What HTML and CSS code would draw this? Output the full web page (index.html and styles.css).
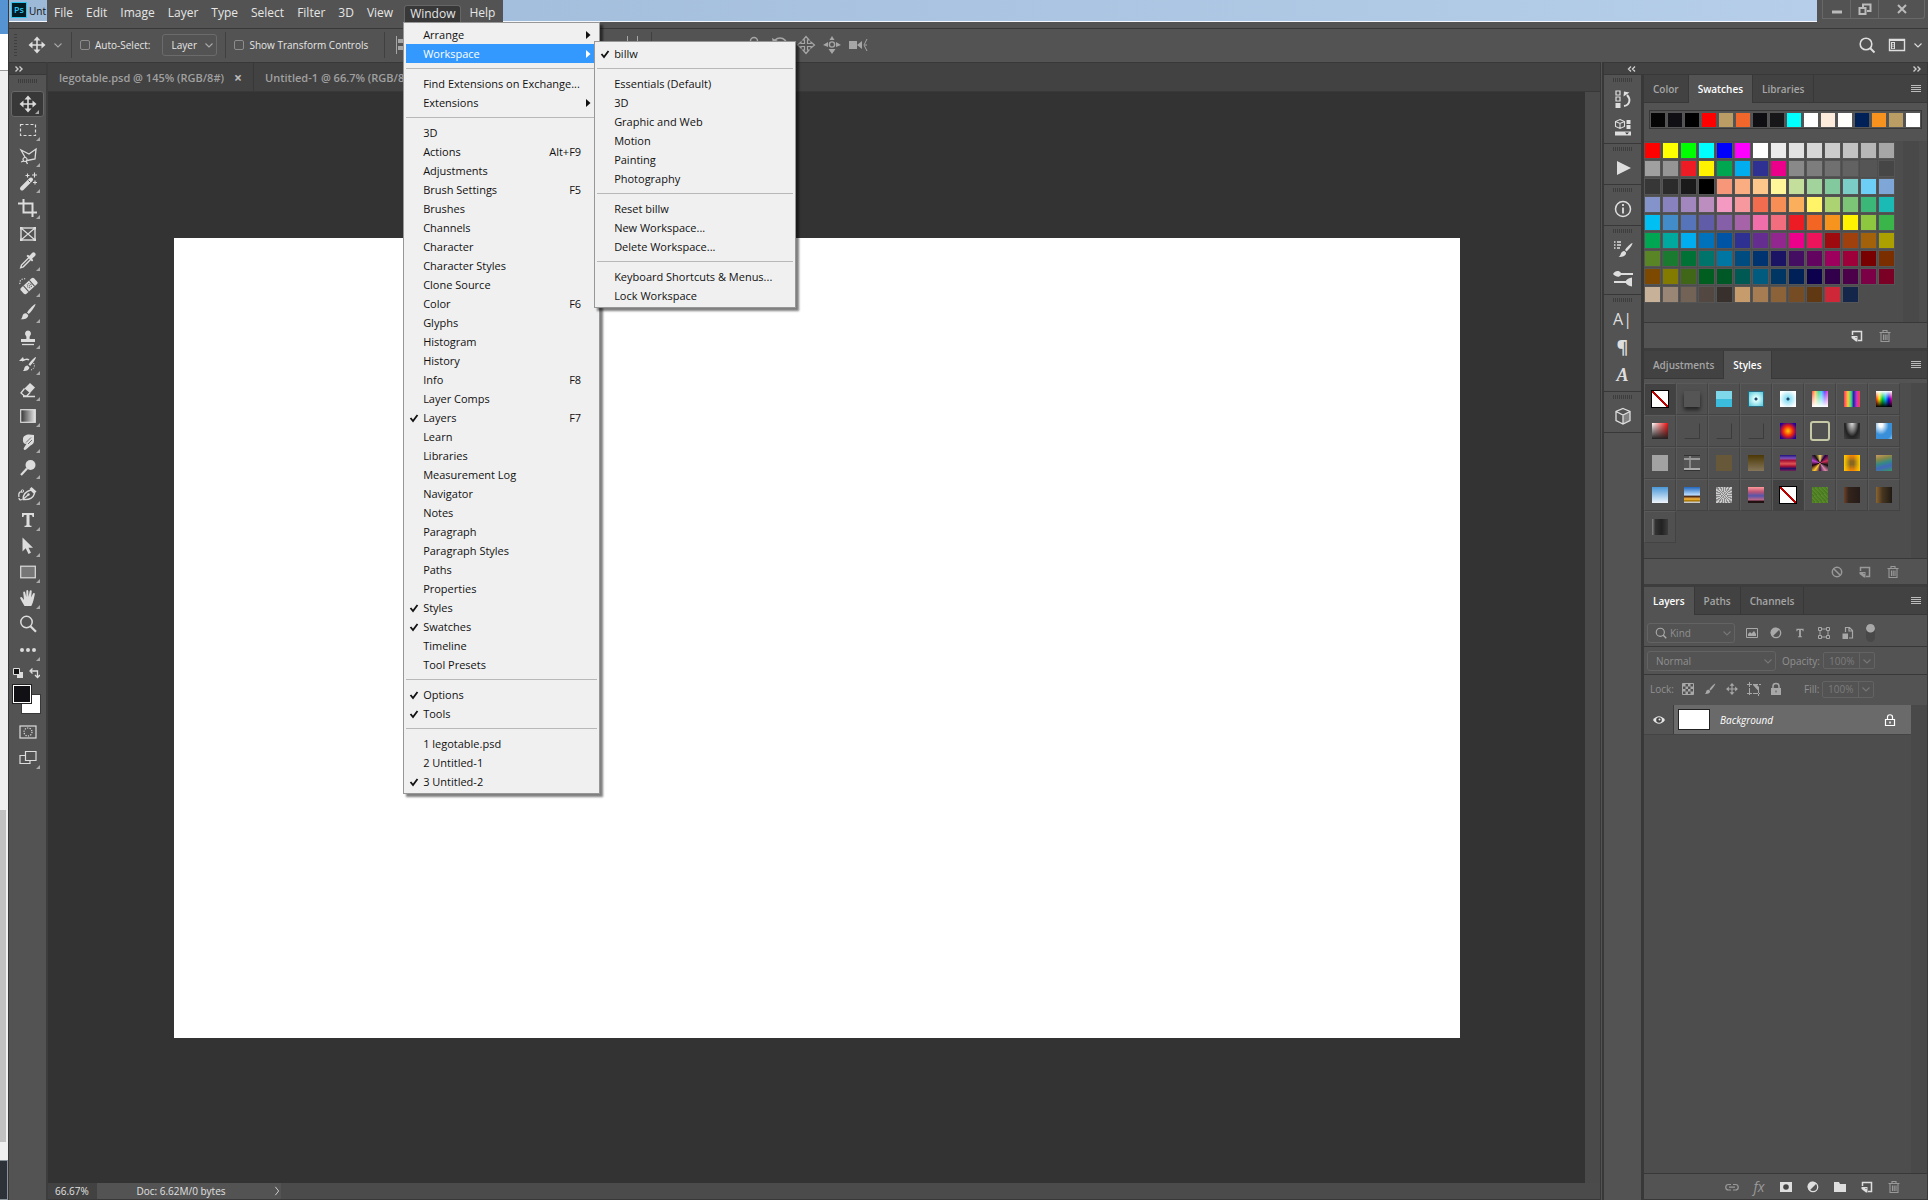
FILE: index.html
```html
<!DOCTYPE html>
<html lang="en">
<head>
<meta charset="utf-8">
<title>Untitled-2</title>
<link rel="stylesheet" href="styles.css">
</head>
<body>
<svg class="sprite" aria-hidden="true">
  <symbol id="move" viewBox="0 0 20 20"><path d="M10 3v14M3 10h14" stroke="currentColor" stroke-width="1.6"/><path d="M10 1.500l3.500 4h-7zM10 18.500l-3.500-4h7zM1.500 10l4-3.500v7zM18.500 10l-4 3.500v-7z" fill="currentColor"/></symbol>
  <symbol id="marquee" viewBox="0 0 20 20"><rect x="2.500" y="4.500" width="15" height="11" fill="none" stroke="currentColor" stroke-width="1.200" stroke-dasharray="3 2"/></symbol>
  <symbol id="lasso" viewBox="0 0 20 20"><path d="M7.500 12L3 4l8 4 7-5-1 10-8 1.500" fill="none" stroke="currentColor" stroke-width="1.300"/><circle cx="7" cy="13.500" r="2" fill="none" stroke="currentColor" stroke-width="1.200"/><path d="M6 15l-3 1M8 15l1.500 3" fill="none" stroke="currentColor" stroke-width="1.300"/></symbol>
  <symbol id="wand" viewBox="0 0 20 20"><path d="M4 16.500L13 7.500" stroke="currentColor" stroke-width="4" stroke-linecap="round"/><path d="M10.500 8.500l1.800 1.800" stroke="#535353"/><path d="M9.500 1.500v4M7.500 3.500h4M16.500.5v5M14 3h5M17 8.500v4M15 10.500h4" stroke="currentColor" stroke-width="1.100"/></symbol>
  <symbol id="crop" viewBox="0 0 20 20"><path d="M5.500 1v13.500H19M1 5.500h13.500V19M1 4.500v2" fill="none" stroke="currentColor" stroke-width="2"/></symbol>
  <symbol id="frame" viewBox="0 0 20 20"><rect x="3" y="4" width="14" height="12" fill="none" stroke="currentColor" stroke-width="1.400"/><path d="M3 4l14 12M17 4L3 16" stroke="currentColor" stroke-width="1.100"/><path d="M2 3h2.500v2.500H2zM15.500 3H18v2.500h-2.500zM2 14.500h2.500V17H2zM15.500 14.500H18V17h-2.500z" fill="currentColor"/></symbol>
  <symbol id="dropper" viewBox="0 0 20 20"><path d="M11 7.500l-7.500 7.500-.8 2.600 2.600-.8 7.500-7.500" fill="none" stroke="currentColor" stroke-width="1.400"/><path d="M8.500 6l1.200-1.200 1.800 1L14 3c2-2 5 .8 3 3l-2.800 2.600 1 1.800-1.200 1.200z" fill="currentColor"/></symbol>
  <symbol id="heal" viewBox="0 0 20 20"><g transform="rotate(-42 11 10)"><rect x="2" y="6" width="18" height="8" rx="2" fill="currentColor"/><path d="M7 6v8M15 6v8" stroke="#535353"/><path d="M10 8.200h.9M12 8.200h.9M9 10h.9M11 10h.9M13 10h.9M10 11.800h.9M12 11.800h.9" stroke="#535353" stroke-width="1.300"/></g><path d="M2 8c-1-4 3-6 6-5" fill="none" stroke="currentColor" stroke-width="1.200" stroke-dasharray="1.200 1.300"/></symbol>
  <symbol id="brush" viewBox="0 0 20 20"><path d="M17.500 2c-1.500 0-7 6-8.500 8.500l1.800 1.500C13 10 17.500 4 17.500 2z" fill="currentColor"/><path d="M8.200 11.200l2 1.800c.3 3-3.700 4.800-7.700 4.200 2-1 1.500-2.200 2.200-4 .5-1.500 2-2.300 3.500-2z" fill="currentColor"/></symbol>
  <symbol id="stamp" viewBox="0 0 20 20"><path d="M10 2.500a3.200 3.200 0 0 1 2 5.500c-.5.700-.5 1.500-.3 3H17v3H3v-3h5.300c.2-1.500.2-2.300-.3-3a3.200 3.200 0 0 1 2-5.500z" fill="currentColor"/><path d="M4 16.500h12" stroke="currentColor" stroke-width="1.300"/></symbol>
  <symbol id="histbrush" viewBox="0 0 20 20"><path d="M18 3c-1.500 0-6 5-7.500 7.500l1.700 1.500C14 10 18 5 18 3zM9.500 11.500l1.800 1.700c0 2.800-3 4-6.500 3.800 1.500-1 1.200-2 1.700-3.500.5-1.300 1.700-2 3-2zM1 7l4-4 1.500 4z" fill="currentColor"/><path d="M4 7c3-2 6-2 7-1" fill="none" stroke="currentColor" stroke-width="1.300"/><path d="M15.500 9c2 3 .5 6-2.500 7" fill="none" stroke="currentColor" stroke-dasharray="1.200 1.300"/></symbol>
  <symbol id="eraser" viewBox="0 0 20 20"><path d="M12 3l5 4.500-5 5.500-5.500-4.500z" fill="currentColor"/><path d="M6.500 8.500L3 13l3.500 3 2.500-.2 3-3.300M5 16.500h12" fill="none" stroke="currentColor" stroke-width="1.300"/></symbol>
  <symbol id="gradient" viewBox="0 0 20 20"><defs><linearGradient id="gr"><stop offset="0" stop-color="#333"/><stop offset="1" stop-color="#e6e6e6"/></linearGradient></defs><rect x="2.700" y="3.700" width="14.600" height="12.600" fill="url(#gr)" stroke="currentColor" stroke-width="1.200"/></symbol>
  <symbol id="smudge" viewBox="0 0 20 20"><path d="M5 7c0-3 3-4.500 6-4.500L16 3v6c0 2-1.500 4-3.500 4.500L8 17.500c-1.500 1.200-3-.2-2-1.700l2.500-4C6 12.500 4.500 10 5 7z" fill="currentColor"/><path d="M8 10.500l5-5M10 12l4-4" stroke="#535353" stroke-width=".8"/></symbol>
  <symbol id="dodge" viewBox="0 0 20 20"><circle cx="12.500" cy="7" r="5" fill="currentColor"/><path d="M9 10.500l-6 6.500" stroke="currentColor" stroke-width="2.200"/></symbol>
  <symbol id="pen" viewBox="0 0 20 20"><path d="M5 15.500c0-4 2-8 8-9.500l3.500 3.500c-1.500 5-5.500 6.500-11.500 6zM5.500 15l5-4.500M1 13c-1-5 2-6 3-4.500M4 15.500c-2 1-3 0-3-1.500" fill="none" stroke="currentColor" stroke-width="1.300"/><path d="M13.500 3l5 4.500-2 2-5-4.500z" fill="currentColor"/><circle cx="10.500" cy="10.500" r="1.200" fill="currentColor"/><circle cx="4.500" cy="7" r="1.200" fill="none" stroke="currentColor"/></symbol>
  <symbol id="type" viewBox="0 0 20 20"><path d="M4 3h12v4h-1.500c0-1.500-.5-2-2-2h-1v9.500c0 1 .5 1.200 2 1.200V17h-7v-1.300c1.500 0 2-.2 2-1.200V5h-1c-1.500 0-2 .5-2 2H4z" fill="currentColor"/></symbol>
  <symbol id="arrow" viewBox="0 0 20 20"><path d="M4.500 1.500v14l3.200-3.200L10.500 18l2.500-1.300-2.500-5h4.500z" fill="currentColor"/></symbol>
  <symbol id="rect" viewBox="0 0 20 20"><rect x="2.700" y="4.200" width="14.600" height="11.600" fill="#777" stroke="currentColor" stroke-width="1.200"/></symbol>
  <symbol id="hand" viewBox="0 0 20 20"><path d="M6.500 18C5 15.500 3.500 13 2.300 10.500 1.800 9 3.500 8.500 4.500 10l1.500 2L5.200 4.500c0-1.300 1.700-1.300 2 0L8.300 9V3c.1-1.300 1.800-1.300 2 0l.2 6L11.700 3c.3-1.200 2-1 2 .3L13.200 9.500l1.800-4c.6-1 2-.5 1.800.7-.8 4-1.500 8-3.500 11.800z" fill="currentColor"/></symbol>
  <symbol id="zoom" viewBox="0 0 20 20"><circle cx="8.500" cy="8" r="5.700" fill="none" stroke="currentColor" stroke-width="1.500"/><path d="M12.500 12.300l5.500 5.500" stroke="currentColor" stroke-width="2.200"/></symbol>
  <symbol id="dots" viewBox="0 0 20 20"><path d="M4 8a2 2 0 1 1 0 4 2 2 0 0 1 0-4zM10 8a2 2 0 1 1 0 4 2 2 0 0 1 0-4zM16 8a2 2 0 1 1 0 4 2 2 0 0 1 0-4z" fill="currentColor"/></symbol>
  <symbol id="mask" viewBox="0 0 20 20"><rect x="2" y="4" width="16" height="12" fill="none" stroke="currentColor" stroke-width="1.200"/><circle cx="10" cy="10" r="4" fill="none" stroke="currentColor" stroke-width="1.200" stroke-dasharray="1.200 1.300"/></symbol>
  <symbol id="screen" viewBox="0 0 20 20"><path d="M7.500 7.500H2v8h10v-3M7.500 3.500H18v9H7.500z" fill="none" stroke="currentColor" stroke-width="1.200"/></symbol>
  <symbol id="search" viewBox="0 0 20 20"><circle cx="9" cy="9" r="5.800" fill="none" stroke="currentColor" stroke-width="1.600"/><path d="M13 13l4.500 4.500" stroke="currentColor" stroke-width="2"/></symbol>
  <symbol id="workspace" viewBox="0 0 20 20"><path d="M2.500 4.500h15v11h-15z" fill="none" stroke="currentColor" stroke-width="1.400"/><path d="M2 4h16v2H2zM4 7h4v7H4z" fill="currentColor"/><path d="M6 8v1.400M6 10.200v1.200M6 12v1.200" stroke="#333" stroke-width="1.500"/></symbol>
  <symbol id="history" viewBox="0 0 20 20"><path d="M3 2h4v4H3zM3 8h4v4H3z" fill="none" stroke="currentColor" stroke-width="1.200"/><path d="M2.500 14h5v5h-5z" fill="currentColor"/><path d="M11 17c6-1 7-7 3-11" fill="none" stroke="currentColor" stroke-width="2"/><path d="M10.500 7.500l.5-5 5.500 1z" fill="currentColor"/></symbol>
  <symbol id="device" viewBox="0 0 20 20"><path d="M7 2.500l4.500 2v5L7 11.500l-4.500-2v-5zM2.500 4.500L7 6.500l4.500-2M7 6.500v5" fill="none" stroke="currentColor" stroke-width="1.100"/><path d="M13.500 3h4v4h-4zM13.500 8h4v4h-4zM2 14.500h16v4H2z" fill="currentColor"/><path d="M12 15.500h4l-2 2z" fill="#333"/></symbol>
  <symbol id="play" viewBox="0 0 20 20"><path d="M4 3l14 7-14 7z" fill="currentColor"/></symbol>
  <symbol id="info" viewBox="0 0 20 20"><circle cx="10" cy="10" r="7.500" fill="none" stroke="currentColor" stroke-width="1.500"/><path d="M10 5v2M10 8.500v6" stroke="currentColor" stroke-width="1.800"/></symbol>
  <symbol id="brushes" viewBox="0 0 20 20"><path d="M19.500 3c-1.500 0-6.500 5-7.500 7l1.500 1.500c2-1.500 6-6.500 6-8.500zM11.500 11l1.500 1.500c.5 3-3.500 5-7.500 4.500 2-1 2-3 3-4.500.7-1 2-1.500 3-1.500z" fill="currentColor"/><path d="M1 2h1.500M4 2h4M1 5h1.500M4 5h4M1 8h1.500M4 8h3" stroke="currentColor" stroke-width="1.300"/></symbol>
  <symbol id="brushset" viewBox="0 0 20 20"><path d="M8 6h12M1 14h12" stroke="currentColor" stroke-width="2"/><path d="M0 6c2-3.500 6-4 8-1v2C6 10 3 9 0 6zM12 14c2-3 4-4 7-4.500v9c-3-.5-5-1.500-7-4.500z" fill="currentColor"/></symbol>
  <symbol id="cube" viewBox="0 0 20 20"><path d="M10 2.500l7 3v9l-7 3.500-7-3.500v-9zM3 5.500l7 3.500 7-3.500M10 9v9" fill="none" stroke="currentColor" stroke-width="1.300"/><path d="M10 9l7-3.500v9L10 18z" fill="currentColor" opacity=".35"/></symbol>
  <symbol id="new" viewBox="0 0 20 20"><path d="M5.500 9V5.500h9v9H11" fill="none" stroke="currentColor" stroke-width="1.500"/><path d="M4.500 10h6v5.500H9L4.500 12z" fill="currentColor"/><path d="M8.500 11.500h1" stroke="#535353"/></symbol>
  <symbol id="trash" viewBox="0 0 20 20"><path d="M4.500 6.500h11M8 6V4.500h4V6M6 7v8.500h8V7M8.500 8.500v5.500M10.200 8.500v5.500M12 8.500v5.500" fill="none" stroke="currentColor" stroke-width="1.100"/></symbol>
  <symbol id="none" viewBox="0 0 20 20"><circle cx="10" cy="10" r="4.700" fill="none" stroke="currentColor" stroke-width="1.500"/><path d="M6.500 6.500l7 7" stroke="currentColor" stroke-width="1.500"/></symbol>
  <symbol id="image" viewBox="0 0 20 20"><path d="M4.500 5.500h11v9h-11z" fill="none" stroke="currentColor"/><path d="M6 13V11l2-2 1.500 1.500L12 8l2 3v2z" fill="currentColor"/></symbol>
  <symbol id="adjust" viewBox="0 0 20 20"><circle cx="10" cy="10" r="4.700" fill="none" stroke="currentColor" stroke-width="1.300"/><path d="M13.500 6.500A5 5 0 1 0 6.500 13.500z" fill="currentColor"/></symbol>
  <symbol id="shape" viewBox="0 0 20 20"><path d="M6 6h8v8H6z" fill="none" stroke="currentColor"/><path d="M4.500 4.500h3v3h-3zM12.500 4.500h3v3h-3zM4.500 12.500h3v3h-3zM12.500 12.500h3v3h-3z" fill="#535353" stroke="currentColor"/></symbol>
  <symbol id="smart" viewBox="0 0 20 20"><path d="M7.500 9V4.500h4l3 3V15H11M11 4.500V8h3.500" fill="none" stroke="currentColor" stroke-width="1.200"/><path d="M4.500 10.500h5.500V16H4.500z" fill="currentColor"/></symbol>
  <symbol id="checker" viewBox="0 0 20 20"><path d="M4.500 4.500h11v11h-11z" fill="none" stroke="currentColor"/><path d="M5 5h2.500v2.500H5zM10 5h2.500v2.500H10zM7.500 7.500H10V10H7.500zM12.500 7.500H15V10h-2.500zM5 10h2.500v2.500H5zM10 10h2.500v2.500H10zM7.500 12.500H10V15H7.500zM12.500 12.500H15V15h-2.500z" fill="currentColor"/></symbol>
  <symbol id="artboard" viewBox="0 0 20 20"><path d="M5.500 3v13M3 5.500h14M3 14.500h13M14.500 9v8" fill="none" stroke="currentColor" stroke-dasharray="5 1"/><path d="M9 5h3l3 3v3h-1.500L9 6z" fill="currentColor"/></symbol>
  <symbol id="lock" viewBox="0 0 20 20"><path d="M5 9h10v7H5z" fill="currentColor"/><path d="M7 9V7c0-3.500 6-3.500 6 0v2" fill="none" stroke="currentColor" stroke-width="1.500"/><path d="M9.500 11.500h1v2h-1z" fill="#535353"/></symbol>
  <symbol id="lockline" viewBox="0 0 20 20"><path d="M5.500 9.500h9v6h-9zM7.500 9V7c0-3 5-3 5 0v2" fill="none" stroke="currentColor" stroke-width="1.200"/><path d="M9.300 11.500h1.400v2H9.300z" fill="currentColor"/></symbol>
  <symbol id="eye" viewBox="0 0 20 20"><path d="M4 10c3.500-5 8.500-5 12 0-3.500 5-8.500 5-12 0z" fill="currentColor"/><circle cx="10" cy="10" r="2.800" fill="#444"/><circle cx="10.500" cy="9.500" r="1" fill="currentColor"/></symbol>
  <symbol id="link" viewBox="0 0 20 20"><path d="M9 7.500H6.500a2.700 2.700 0 0 0 0 5.500H9M11 7.500h2.500a2.700 2.700 0 0 1 0 5.500H11M7 10.200h6" fill="none" stroke="currentColor" stroke-width="1.200"/></symbol>
  <symbol id="addmask" viewBox="0 0 20 20"><path d="M4 5h12v10H4z" fill="currentColor"/><circle cx="10" cy="10" r="2.800" fill="#444"/></symbol>
  <symbol id="folder" viewBox="0 0 20 20"><path d="M4 5h5l1 2h6v8H4z" fill="currentColor"/></symbol>
  <symbol id="chev" viewBox="0 0 10 10"><path d="M1.500 3.500L5 7l3.500-3.500" fill="none" stroke="currentColor" stroke-width="1.100"/></symbol>
  <symbol id="tick" viewBox="0 0 10 10"><path d="M1.500 5l2.500 3 4.500-6" fill="none" stroke="currentColor" stroke-width="1.800"/></symbol>
  <symbol id="tri" viewBox="0 0 10 10"><path d="M3 1l4.500 4L3 9z" fill="currentColor"/></symbol>
  <symbol id="ff" viewBox="0 0 10 10"><path d="M1.500 2.500L4 5 1.500 7.500M5.500 2.500L8 5 5.500 7.500" fill="none" stroke="currentColor" stroke-width="1.400"/></symbol>
  <symbol id="rew" viewBox="0 0 10 10"><path d="M4 2.500L1.500 5 4 7.500M8 2.500L5.500 5 8 7.500" fill="none" stroke="currentColor" stroke-width="1.400"/></symbol>
  <symbol id="alignl" viewBox="0 0 20 20"><path d="M3.500 1v18" stroke="currentColor"/><path d="M5 4h10v4H5zM5 11h7v4H5z" fill="currentColor"/></symbol>
  <symbol id="dist" viewBox="0 0 20 20"><path d="M4.500 1v18M14.500 1v18" stroke="currentColor"/><path d="M7 6h5v8H7z" fill="currentColor"/></symbol>
  <symbol id="orbit" viewBox="0 0 20 20"><circle cx="10" cy="6" r="3.500" fill="none" stroke="currentColor" stroke-width="1.400"/><path d="M3 10c1 7 13 7 14 0" fill="none" stroke="currentColor" stroke-width="1.400"/></symbol>
  <symbol id="roll" viewBox="0 0 20 20"><path d="M5 15a7 7 0 1 1 10 0" fill="none" stroke="currentColor" stroke-width="1.500"/><path d="M2 3l1 6 5-3z" fill="currentColor"/></symbol>
  <symbol id="pan" viewBox="0 0 20 20"><path d="M10 1.500l3 3.500h-1.500v3.500H15V7l3.500 3-3.500 3v-1.500h-3.500V15H13l-3 3.500L7 15h1.500v-3.500H5V13l-3.500-3L5 7v1.500h3.500V5H7z" fill="none" stroke="currentColor" stroke-width="1.200"/></symbol>
  <symbol id="slide" viewBox="0 0 20 20"><circle cx="10" cy="9.500" r="2.600" fill="none" stroke="currentColor" stroke-width="1.400"/><path d="M10 1l2.500 4h-5zM10 19l-3.500-5h7zM1 10l5-3v5zM19 10l-5 2V7z" fill="currentColor"/></symbol>
  <symbol id="camera" viewBox="0 0 20 20"><path d="M1 6h8v8H1zM9 10l5-4v8z" fill="currentColor"/><path d="M19 4l-3 6 3 6M17 10h2" fill="none" stroke="currentColor"/></symbol>
</svg>

<div class="desktop">
  <aside class="behind"><div class="behind-top"></div><div class="behind-page"></div><div class="behind-track"><div class="behind-thumb"></div></div><div class="behind-dark"></div></aside>

  <div class="app">
    <header class="titlebar">
      <span class="logo">Ps</span><span class="doc-name">Unt</span>
      <nav class="menubar">
        <button>File</button><button>Edit</button><button>Image</button><button>Layer</button><button>Type</button><button>Select</button><button>Filter</button><button>3D</button><button>View</button>
        <div class="menu-host">
          <button class="open">Window</button>
          <div class="popup popup-main">
            <button><span>Arrange</span><svg class="sub"><use href="#tri"/></svg></button>
            <button class="active"><span>Workspace</span><svg class="sub"><use href="#tri"/></svg></button>
            <hr>
            <button><span>Find Extensions on Exchange...</span></button>
            <button><span>Extensions</span><svg class="sub"><use href="#tri"/></svg></button>
            <hr>
            <button>3D</button>
            <button><span>Actions</span><kbd>Alt+F9</kbd></button>
            <button>Adjustments</button>
            <button><span>Brush Settings</span><kbd>F5</kbd></button>
            <button>Brushes</button>
            <button>Channels</button>
            <button>Character</button>
            <button>Character Styles</button>
            <button>Clone Source</button>
            <button><span>Color</span><kbd>F6</kbd></button>
            <button>Glyphs</button>
            <button>Histogram</button>
            <button>History</button>
            <button><span>Info</span><kbd>F8</kbd></button>
            <button>Layer Comps</button>
            <button><svg class="tick"><use href="#tick"/></svg><span>Layers</span><kbd>F7</kbd></button>
            <button>Learn</button>
            <button>Libraries</button>
            <button>Measurement Log</button>
            <button>Navigator</button>
            <button>Notes</button>
            <button>Paragraph</button>
            <button>Paragraph Styles</button>
            <button>Paths</button>
            <button>Properties</button>
            <button><svg class="tick"><use href="#tick"/></svg>Styles</button>
            <button><svg class="tick"><use href="#tick"/></svg>Swatches</button>
            <button>Timeline</button>
            <button>Tool Presets</button>
            <hr>
            <button><svg class="tick"><use href="#tick"/></svg>Options</button>
            <button><svg class="tick"><use href="#tick"/></svg>Tools</button>
            <hr>
            <button>1 legotable.psd</button>
            <button>2 Untitled-1</button>
            <button><svg class="tick"><use href="#tick"/></svg>3 Untitled-2</button>
          </div>
          <div class="popup popup-sub">
            <button><svg class="tick"><use href="#tick"/></svg>billw</button>
            <hr>
            <button>Essentials (Default)</button>
            <button>3D</button>
            <button>Graphic and Web</button>
            <button>Motion</button>
            <button>Painting</button>
            <button>Photography</button>
            <hr>
            <button>Reset billw</button>
            <button>New Workspace...</button>
            <button>Delete Workspace...</button>
            <hr>
            <button>Keyboard Shortcuts &amp; Menus...</button>
            <button>Lock Workspace</button>
          </div>
        </div>
        <button>Help</button>
      </nav>
      <div class="window-controls">
        <button aria-label="Minimize"><svg viewBox="0 0 14 14"><path d="M2 10h10" stroke="currentColor" stroke-width="3"/></svg></button>
        <button aria-label="Restore"><svg viewBox="0 0 14 14"><path d="M5 6V2.500h7.500V9H9M1.500 6h6v6h-6z" fill="none" stroke="currentColor" stroke-width="2"/></svg></button>
        <button class="close" aria-label="Close"><svg viewBox="0 0 14 14"><path d="M3 3l8 8M11 3l-8 8" stroke="currentColor" stroke-width="2"/></svg></button>
      </div>
    </header>

    <div class="options">
      <i class="vgrip"></i>
      <svg class="ic bright"><use href="#move"/></svg>
      <svg class="chev"><use href="#chev"/></svg>
      <i class="vsep"></i>
      <label><input type="checkbox">Auto-Select:</label>
      <span class="select"><select aria-label="Auto-select target"><option>Layer</option></select><svg class="chev"><use href="#chev"/></svg></span>
      <i class="vsep"></i>
      <label><input type="checkbox">Show Transform Controls</label>
      <i class="vsep wide"></i>
      <div class="aligns"><svg class="ic"><use href="#alignl"/></svg><svg class="ic"><use href="#dist"/></svg><svg class="ic"><use href="#dist"/></svg></div>
      <i class="vsep"></i>
      <div class="modes"><svg class="ic"><use href="#orbit"/></svg><svg class="ic"><use href="#roll"/></svg><svg class="ic"><use href="#pan"/></svg><svg class="ic"><use href="#slide"/></svg><svg class="ic"><use href="#camera"/></svg></div>
      <div class="right-tools">
        <button aria-label="Search"><svg class="ic"><use href="#search"/></svg></button>
        <button aria-label="Workspace"><svg class="ic"><use href="#workspace"/></svg></button>
        <svg class="chev"><use href="#chev"/></svg>
      </div>
    </div>

    <div class="work">
      <aside class="toolbox">
        <div class="dock-head"><svg class="dbl"><use href="#ff"/></svg></div>
        <i class="hgrip"></i>
        <div class="tools" id="tools"></div>
        <div class="mini"><svg viewBox="0 0 12 12"><path d="M5 5h6v6H5z" fill="#ddd"/><path d="M1.500 1.500h6v6h-6z" fill="#111" stroke="#ddd"/></svg><svg viewBox="0 0 12 12"><path d="M3 4h6.500v6M4.500 1.500L2 4l2.500 2.500M7 8l2.500 2.500L12 8" fill="none" stroke="#ddd" stroke-width="1.300"/></svg></div>
        <div class="colors"><button class="bg" aria-label="Background color"></button><button class="fg" aria-label="Foreground color"></button></div>
        <button class="tool plain" aria-label="Quick mask"><svg class="ic"><use href="#mask"/></svg></button>
        <button class="tool" aria-label="Screen mode"><svg class="ic"><use href="#screen"/></svg></button>
      </aside>

      <main class="document">
        <div class="doc-tabs">
          <div class="doc-tab">legotable.psd @ 145% (RGB/8#)<button aria-label="Close tab">×</button></div>
          <div class="doc-tab">Untitled-1 @ 66.7% (RGB/8#)</div>
        </div>
        <div class="canvas-row"><div class="canvas"><div class="artboard"></div></div><div class="vscroll"></div></div>
        <footer class="status"><span class="pct">66.67%</span><span class="docinfo">Doc: 6.62M/0 bytes</span><button aria-label="More"><svg viewBox="0 0 8 12"><path d="M2 1l4 5-4 5" fill="none" stroke="currentColor" stroke-width="1.200"/></svg></button></footer>
      </main>

      <section class="dock">
        <div class="dock-head split"><svg class="dbl"><use href="#rew"/></svg><svg class="dbl"><use href="#ff"/></svg></div>
        <div class="dock-body">
          <aside class="iconbar">
            <div class="igroup"><i class="hgrip"></i><button aria-label="History"><svg class="ic"><use href="#history"/></svg></button><button aria-label="Device preview"><svg class="ic"><use href="#device"/></svg></button></div>
            <div class="igroup"><i class="hgrip"></i><button aria-label="Actions"><svg class="ic"><use href="#play"/></svg></button></div>
            <div class="igroup"><i class="hgrip"></i><button aria-label="Info"><svg class="ic"><use href="#info"/></svg></button></div>
            <div class="igroup"><i class="hgrip"></i><button aria-label="Brushes"><svg class="ic"><use href="#brushes"/></svg></button><button aria-label="Brush settings"><svg class="ic"><use href="#brushset"/></svg></button></div>
            <div class="igroup"><i class="hgrip"></i><button class="g-char">A|</button><button class="g-par">¶</button><button class="g-gly">A</button></div>
            <div class="igroup"><i class="hgrip"></i><button aria-label="3D"><svg class="ic"><use href="#cube"/></svg></button></div>
          </aside>

          <div class="panels">
            <section class="panel">
              <div class="tabs"><button>Color</button><button class="on">Swatches</button><button>Libraries</button><i class="burger"></i></div>
              <div class="recent" id="recent"></div>
              <div class="scroller swatch-area"><div class="swatches" id="swatches"></div><div class="track"></div></div>
              <div class="pfoot swatch-foot"><svg class="ic bright"><use href="#new"/></svg><svg class="ic"><use href="#trash"/></svg></div>
            </section>

            <section class="panel">
              <div class="tabs"><button>Adjustments</button><button class="on">Styles</button><i class="burger"></i></div>
              <div class="scroller style-area"><div class="styles" id="styles"></div><div class="track"></div></div>
              <div class="pfoot style-foot"><svg class="ic"><use href="#none"/></svg><svg class="ic"><use href="#new"/></svg><svg class="ic"><use href="#trash"/></svg></div>
            </section>

            <section class="panel grow">
              <div class="tabs"><button class="on">Layers</button><button>Paths</button><button>Channels</button><i class="burger"></i></div>
              <div class="lrow filter">
                <span class="select kind"><svg class="ic"><use href="#search"/></svg><select aria-label="Filter kind"><option>Kind</option></select><svg class="chev"><use href="#chev"/></svg></span>
                <div class="ficons"><svg class="ic"><use href="#image"/></svg><svg class="ic"><use href="#adjust"/></svg><svg class="ic ty"><use href="#type"/></svg><svg class="ic"><use href="#shape"/></svg><svg class="ic"><use href="#smart"/></svg></div>
                <i class="toggle"></i>
              </div>
              <div class="lrow blend">
                <span class="select mode"><select aria-label="Blend mode"><option>Normal</option></select><svg class="chev"><use href="#chev"/></svg></span>
                <label for="op">Opacity:</label><span class="num"><input id="op" value="100%"><svg class="chev"><use href="#chev"/></svg></span>
              </div>
              <div class="lrow locks">
                <span>Lock:</span>
                <div class="licons"><svg class="ic"><use href="#checker"/></svg><svg class="ic"><use href="#brush"/></svg><svg class="ic"><use href="#move"/></svg><svg class="ic"><use href="#artboard"/></svg><svg class="ic"><use href="#lock"/></svg></div>
                <label for="fill">Fill:</label><span class="num"><input id="fill" value="100%"><svg class="chev"><use href="#chev"/></svg></span>
              </div>
              <div class="scroller layer-area">
                <div class="layers"><div class="layer"><button class="vis" aria-label="Visibility"><svg class="ic"><use href="#eye"/></svg></button><div class="layer-body"><i class="thumb"></i><em>Background</em><svg class="ic"><use href="#lockline"/></svg></div></div></div>
                <div class="track"></div>
              </div>
              <div class="pfoot layer-foot"><svg class="ic"><use href="#link"/></svg><i class="fx">fx</i><svg class="ic bright"><use href="#addmask"/></svg><svg class="ic bright"><use href="#adjust"/></svg><svg class="ic bright"><use href="#folder"/></svg><svg class="ic bright"><use href="#new"/></svg><svg class="ic"><use href="#trash"/></svg></div>
            </section>
          </div>
        </div>
      </section>
    </div>
  </div>
</div>
<script src="app.js"></script>
</body>
</html>
```
FILE: app.js
```js
const recent = "050505 0f0f14 000000 ff0000 b99d64 f1672b 0f0f13 17171a 00ffff ffffff fdecdc fffefa 002157 f8921f b99d64 ffffff";
const swatches = [
  "ff0000 ffff00 00ff00 00ffff 0000ff ff00ff ffffff ebebeb e1e1e1 d7d7d7 cccccc c2c2c2 b7b7b7 a6a6a6",
  "a0a0a0 959595 ed1c24 fff200 00a650 00adef 2e3192 ec008b 898989 7d7d7d 707070 626262 555555 464646",
  "373737 2b2b2b 1a1a1a 000000 f7977a f9ad81 fdc68a fff79a c4df9b a2d39c 82ca9d 7bcdc8 6ecff6 7ea7d8",
  "8493ca 8882be a187be bc8dbf f49ac2 f6989d f26c4f f68e55 fbaf5c fff467 acd372 7cc576 3bb878 1abbb4",
  "00bff3 438cca 5574b9 605ca8 855fa8 a763a8 f06ea9 f26d7d ed1c24 f26522 f7941d fff200 8dc73f 39b54a",
  "00a651 00a99d 00aeef 0072bc 0054a6 2e3192 662d91 92278f ec008c ed145b 9e0b0f a0410d a36209 aba000",
  "598527 1a7b30 007236 00746b 0076a3 004b80 003471 1b1464 440e62 630460 9e005d 9e0039 790000 7b2e00",
  "7d4900 827b00 406618 005e20 005826 005952 005b7f 003663 002157 0d004c 32004b 4b0049 7b0046 7a0026",
  "c7b299 998675 736357 534741 37302d c69c6d a67c52 8c6239 754c24 603913 ce2838 14274a"
].join(" ");
const fill = (id, data) => {
  document.getElementById(id).innerHTML = data.split(" ").map(c => `<i style="background:#${c}"></i>`).join("");
};
fill("recent", recent);
fill("swatches", swatches);

const styleNames = "none shadow aqua glow glow2 pastel spectrum rainbow redfade bevel bevel2 bevel3 sunset ring tunnel sky gray crack brown bronze stripes chaos gold opal bluefade horizon noise dusk none grass wood wood2 dark";
document.getElementById("styles").innerHTML = styleNames.split(" ").map(n => `<button class="cell cell-${n}" aria-label="${n}"><i></i></button>`).join("");

const tools = "move marquee lasso wand crop frame dropper heal brush stamp histbrush eraser gradient smudge dodge pen type arrow rect hand zoom dots";
document.getElementById("tools").innerHTML = tools.split(" ").map((n, i) =>
  `<button class="tool${i ? "" : " on"}${n === "frame" || n === "zoom" ? " plain" : ""}" aria-label="${n}"><svg class="ic"><use href="#${n}"/></svg></button>`).join("");
```
FILE: styles.css
```css
* { box-sizing: border-box; }
body { margin: 0; font: 10px/16px "Open Sans", "Noto Sans", sans-serif; color: #e0e0e0; background: #535353; overflow: hidden; }
button, input, select { font: inherit; color: inherit; background: none; border: 0; padding: 0; margin: 0; }
select { appearance: none; }
.sprite { position: absolute; width: 0; height: 0; }
.ic { width: 20px; height: 20px; display: block; flex: none; }
.chev { width: 10px; height: 10px; flex: none; }
.bright { color: #dedede; }

.desktop { display: flex; height: 100vh; }
.behind { width: 8px; display: flex; flex-direction: column; background: #f0f0f0; }
.behind-top { height: 34px; background: #5593d2; }
.behind-page { height: 37px; background: #fff; border-bottom: 1px solid #999; }
.behind-track { flex: 1; display: flex; flex-direction: column; justify-content: flex-end; padding: 0 2px 18px 0; }
.behind-thumb { height: 31%; background: #c1c1c1; }
.behind-dark { height: 40px; background: #2c3238; border: 1px solid #8a929a; border-left: 0; }
.app { flex: 1; min-width: 0; display: flex; flex-direction: column; border-left: 1px solid #383838; }

.titlebar { height: 22px; display: flex; background: linear-gradient(90deg, #9db9d8, #b7cfea); border-bottom: 1px solid #f4f8fc; color: #e6e6e6; }
.logo { width: 16px; height: 16px; margin: 2px 2px 0; background: #001d26; border: 1px solid #2ec4ee; color: #2ec4ee; font-size: 9px; line-height: 13px; text-align: center; font-weight: 600; }
.doc-name { width: 18px; color: #111; line-height: 22px; }
.menubar { display: flex; height: 22px; background: #535353; padding: 0 1px; }
.menubar > button, .menu-host > button { height: 22px; padding: 4px 7px 0 6px; font-size: 12px; line-height: 16px; }
.menu-host { position: relative; margin: 0 2px 0 4px; }
.menu-host > .open { display: block; background: #383838; border: 1px solid #666; border-bottom: 0; border-radius: 3px 3px 0 0; padding: 0 5px; height: 17px; margin-top: 5px; line-height: 14px; }
.popup { position: absolute; z-index: 5; background: #f0f0f0; border: 1px solid #979797; padding: 2px; box-shadow: 3px 3px 2px rgba(0,0,0,.5); color: #111; display: flex; flex-direction: column; font-size: 11px; }
.popup-main { top: 22px; left: -1px; width: 197px; }
.popup-sub { top: 41px; left: 190px; width: 202px; }
.popup button { height: 19px; display: flex; align-items: center; padding-left: 17px; text-align: left; position: relative; white-space: nowrap; }
.popup .active { background: #3399ff; color: #fff; }
.popup hr { width: 100%; height: 1px; margin: 5px 0; border: 0; background: #b8b8b8; }
.popup kbd { font: inherit; margin-left: auto; padding-right: 16px; }
.popup .sub { width: 10px; height: 10px; margin-left: auto; margin-right: 4px; }
.popup .tick { position: absolute; left: 3px; width: 10px; height: 10px; }
.window-controls { margin-left: auto; background: #535353; padding: 0 3px 0 5px; display: flex; height: 22px; }
.window-controls button { width: 28px; height: 19px; border: 1px solid #686868; border-top: 0; border-right: 0; color: #bbb; display: grid; place-items: center; }
.window-controls .close { width: 47px; border-right: 1px solid #686868; border-radius: 0 0 3px 0; }
.window-controls svg { width: 14px; height: 14px; }

.options { height: 40px; border-top: 6px solid #535353; display: flex; align-items: center; padding: 0 5px; box-shadow: inset 0 1px #383838; background: #535353; color: #a6a6a6; }
.options label { display: flex; align-items: center; gap: 5px; color: #e6e6e6; font-weight: 500; white-space: nowrap; }
input[type=checkbox] { appearance: none; width: 10px; height: 10px; border: 1px solid #8c8c8c; border-radius: 2px; }
.vgrip { width: 3px; height: 22px; margin-right: 10px; background: repeating-linear-gradient(#3f3f3f 0 1px, #535353 1px 3px); }
.options .chev { margin-left: 6px; }
.vsep { width: 1px; height: 26px; background: #404040; margin: 0 8px; }
.vsep.wide { margin: 0 8px 0 16px; }
.options > .select { width: 55px; height: 22px; margin-left: 12px; }
.select { display: flex; align-items: center; border: 1px solid #6b6b6b; border-radius: 3px; padding: 0 2px 0 8px; }
.select select { flex: 1; min-width: 0; }
.options > .select { color: #e6e6e6; font-weight: 500; }
.options > .select .chev { margin: 0; color: #aaa; }
.aligns { width: 250px; display: flex; justify-content: space-between; }
.modes { display: flex; gap: 6px; margin-left: 84px; }
.right-tools { margin-left: auto; display: flex; align-items: center; gap: 10px; color: #dedede; }
.options .right-tools .chev { margin: 0 0 0 -4px; }

.work { flex: 1; min-height: 0; display: flex; }
.dock-head { height: 13px; background: #424242; border-top: 1px solid #383838; border-bottom: 1px solid #383838; padding: 0 5px; display: flex; align-items: center; flex: none; color: #ccc; }
.dbl { width: 10px; height: 10px; }
.hgrip { display: block; width: 20px; height: 4px; margin: 4px auto 0; background: repeating-linear-gradient(90deg, #3d3d3d 0 1px, #535353 1px 2px); }
.toolbox { width: 39px; border-right: 2px solid #3d3d3d; display: flex; flex-direction: column; }
.tools { margin-top: 8px; }
.tool { display: grid; place-items: center; width: 33px; height: 26px; margin-left: 2px; position: relative; color: #dcdcdc; }
.tool::after { content: ""; position: absolute; right: 4px; bottom: 2px; border: 2px solid; border-color: transparent #aaa #aaa transparent; }
.plain::after { content: none; }
.tool.on { background: #383838; border: 1px solid #686868; border-radius: 3px; }
.mini { display: flex; justify-content: space-between; padding: 4px 6px 0 3px; height: 21px; }
.mini svg { width: 12px; height: 12px; }
.colors { display: grid; width: 29px; height: 30px; margin: 0 0 5px 3px; }
.colors button { grid-area: 1 / 1; width: 20px; height: 20px; border: 1px solid #383838; }
.colors .bg { background: #fff; place-self: end; }
.colors .fg { background: #101015; border-color: #222; box-shadow: inset 0 0 0 1px #fff; }

.document { flex: 1; min-width: 0; display: flex; flex-direction: column; border-right: 1px solid #383838; }
.doc-tabs { height: 30px; background: #424242; border-top: 1px solid #383838; border-bottom: 1px solid #383838; display: flex; }
.doc-tab { display: flex; align-items: center; color: #a0a0a0; font-size: 11px; font-weight: 600; padding: 1px 11px 0; border-right: 1px solid #383838; white-space: nowrap; }
.doc-tab button { margin-left: 10px; font-size: 14px; font-weight: 700; color: #bbb; }
.canvas-row { flex: 1; display: flex; min-height: 0; }
.canvas { flex: 1; background: #333; padding: 146px 125px 145px 126px; display: flex; }
.artboard { flex: 1; background: #fff; }
.vscroll { width: 15px; background: #4a4a4a; }
.status { height: 17px; display: flex; align-items: center; background: #4b4b4b; border-bottom: 1px solid #383838; line-height: 16px; }
.pct { width: 49px; padding-left: 7px; background: #424242; }
.docinfo { width: 168px; text-align: center; background: #535353; }
.status button { width: 16px; height: 16px; background: #535353; color: #ccc; }
.status svg { width: 8px; height: 10px; display: block; margin-left: 8px; }

.dock { width: 326px; flex: none; display: flex; flex-direction: column; border-left: 2px solid #383838; border-right: 1px solid #383838; margin-left: 1px; }
.dock-head.split { justify-content: space-between; padding-left: 23px; }
.dock-body { flex: 1; display: flex; min-height: 0; }
.iconbar { width: 39px; border-right: 2px solid #383838; }
.igroup { border-bottom: 1px solid #383838; padding: 3px 0 2px; }
.igroup button { width: 37px; height: 28px; display: grid; place-items: center; color: #dedede; }
.igroup .hgrip { margin: 0 auto 3px; }
.igroup .g-char { font-size: 16px; }
.igroup .g-par { font-size: 18px; font-weight: 700; }
.igroup .g-gly { font: italic 700 18px "Liberation Serif", serif; }

.panels { flex: 1; min-width: 0; display: flex; flex-direction: column; border-left: 1px solid #383838; }
.panel { display: flex; flex-direction: column; border-bottom: 3px solid #3d3d3d; flex: none; }
.panel.grow { flex: 1; border-bottom: 1px solid #383838; min-height: 0; }
.tabs { height: 28px; display: flex; background: #424242; flex: none; box-shadow: inset 0 -1px #383838; align-items: stretch; }
.tabs button { padding: 0 9px; color: #a6a6a6; font-weight: 600; border-right: 1px solid #383838; }
.tabs .on { background: #535353; color: #fff; }
.burger { width: 10px; height: 7px; margin: 10px 6px 0 auto; background: repeating-linear-gradient(#bbb 0 1px, #424242 1px 2px); }
.recent { display: flex; gap: 1px; height: 19px; margin: 7px 5px 12px; border: 1px solid #383838; padding: 1px 0 0; }
.recent i { width: 16px; height: 16px; border: 1px solid #555; }
.scroller { display: flex; background: #4d4d4d; border-bottom: 1px solid #383838; }
.scroller > :first-child { flex: 1; align-content: start; }
.track { width: 16px; background: #494949; margin-right: 8px; }
.swatch-area { height: 182px; }
.swatches { display: grid; grid-template-columns: repeat(14, 18px); grid-auto-rows: 18px; padding-top: 1px; }
.swatches i { width: 17px; height: 17px; border: 1px solid #555; }
.pfoot { height: 25px; display: flex; align-items: center; justify-content: flex-end; color: #999; flex: none; }
.swatch-foot { gap: 8px; padding-right: 32px; }
.style-foot { gap: 8px; padding-right: 24px; }
.layer-foot { gap: 7px; padding-right: 23px; }
.fx { width: 20px; text-align: center; font-size: 14px; }

.style-area { height: 176px; margin-top: 4px; }
.style-area .track, .layer-area .track { margin-right: 0; }
.styles { display: grid; grid-template-columns: repeat(8, 32px); grid-auto-rows: 32px; }
.cell { border: 1px solid #434343; border-left-color: #5a5a5a; border-top-color: #5a5a5a; background: #505050; display: grid; place-items: center; }
.cell i { display: block; width: 16px; height: 16px; }
.cell-none { background: #424242; }
.cell-none i { width: 18px; height: 18px; border: 1px solid #000; background: linear-gradient(45deg, #fff 45%, #b00 45% 55%, #fff 55%); }
.cell-shadow i { background: #555; box-shadow: 0 3px 4px #222; }
.cell-aqua i { background: linear-gradient(#7fd8ea 50%, #3cbcdc 50%); }
.cell-glow i { background: radial-gradient(#246 1px, #dff 2px, #6cd 9px); border: 1px solid #286a80; }
.cell-glow2 i { background: radial-gradient(#246 1px, #8de0f5 2px, #fff 9px); }
.cell-pastel i { background: linear-gradient(transparent, #fff), linear-gradient(90deg, #f44, #fc6, #5d8, #4cf, #64f, #f4c); }
.cell-spectrum i { background: linear-gradient(90deg, #f36, #fc3 25%, #3d8 45%, #22a 60%, #c3c 80%, #f43); }
.cell-rainbow i { background: linear-gradient(#fff, transparent 50%, #000), linear-gradient(90deg, #f22, #fe0, #0c3, #0bf, #20d, #f08); }
.cell-redfade i { background: linear-gradient(transparent, #222), linear-gradient(90deg, #fff, #e11); }
.cell-bevel i, .cell-bevel2 i, .cell-bevel3 i { border: 1px solid #505050; border-right-color: #3c3c3c; border-bottom-color: #3c3c3c; }
.cell-sunset i { background: radial-gradient(#fc0, #e21 45%, #209 85%); }
.cell-ring i { width: 20px; height: 20px; border: 2px solid #c6c8a6; border-radius: 3px; }
.cell-tunnel i { background: radial-gradient(at 50% 0, #ddd, #666 40%, #222 60%, #444); }
.cell-sky i { background: radial-gradient(at 30% 10%, #fff 10%, #3a90d8 50%, #3a90d8 80%, #8cf); }
.cell-gray i { background: #a3a3a3; }
.cell-crack i { background: linear-gradient(#333 1px, transparent 1px 3px, #999 3px 5px, transparent 5px 13px, #aaa 13px 15px, #333 15px), linear-gradient(90deg, #555 5px, #888 5px 7px, #555 7px); }
.cell-brown i { background: #665838; }
.cell-bronze i { background: linear-gradient(#4c3806, #85765a); }
.cell-stripes i { background: linear-gradient(#21107a, #75b 20%, #a13 35%, #d55 55%, #a13 70%, #216 85%, #725); }
.cell-chaos i { background: conic-gradient(#fd6, #204, #c35, #111, #d8a, #314, #fc3, #201, #b4c, #111, #fd6); }
.cell-gold i { background: linear-gradient(90deg, #fc0, transparent 40% 60%, #fc0), linear-gradient(#f80, #862 40% 60%, #f80); }
.cell-opal i { background: linear-gradient(165deg, #c96, #884 25%, #388 50%, #46b 70%, #396); }
.cell-bluefade i { background: linear-gradient(#4a98d8, #f0f6fc); }
.cell-horizon i { background: linear-gradient(#26b, #bdf 50%, #421 58%, #fb4 75%, #a70 85%, #cdf); }
.cell-noise i { background: repeating-conic-gradient(#ccc 0 8deg, #888 12deg 20deg); }
.cell-dusk i { background: linear-gradient(#f99, #b57 30%, #55a 55%, #b68 80%, #211 90%); }
.cell-grass i { background: repeating-linear-gradient(50deg, #5b8d2c, #47741f 3px); }
.cell-wood i { background: linear-gradient(90deg, #6b4028, #33241b 30%, #261b17); }
.cell-wood2 i { background: linear-gradient(90deg, #8a6530, #463620 40%, #201a14); }
.cell-dark i { background: linear-gradient(90deg, #888, #333 20%, #222 60%, #3d3d3d); }

.lrow { display: flex; align-items: center; border-bottom: 1px solid #383838; color: #909090; padding-left: 3px; flex: none; }
.lrow .select, .num { border-color: #636363; }
.lrow .chev { color: #777; }
.filter { height: 32px; padding-top: 4px; }
.kind { width: 88px; height: 20px; padding-left: 6px; }
.kind .ic { width: 14px; height: 14px; margin-right: 2px; color: #aaa; }
.ficons { display: flex; gap: 4px; margin-left: 7px; color: #a8a8a8; }
.ty { padding: 4px; }
.toggle { width: 9px; height: 18px; margin-left: 8px; border-radius: 5px; background: radial-gradient(circle at 50% 4px, #a8a8a8 4px, #484848 5px); }
.blend { height: 28px; }
.mode { width: 129px; height: 20px; margin-right: 6px; }
.blend label { width: 41px; }
.num { display: flex; align-items: center; width: 52px; height: 17px; border: 1px solid #636363; border-radius: 2px; color: #7c7c7c; }
.num input { width: 36px; height: 15px; padding-left: 5px; border-right: 1px solid #636363; }
.num .chev { margin-left: 2px; }
.locks { height: 30px; border-bottom: 0; padding-bottom: 2px; }
.locks > span:first-child { width: 31px; padding-left: 3px; }
.licons { display: flex; gap: 2px; margin-right: 18px; color: #a8a8a8; }
.licons .ic:nth-child(2), .licons .ic:nth-child(3) { padding: 3px; }
.locks label { width: 18px; }
.layer-area { flex: 1; min-height: 0; }
.layer { display: flex; height: 30px; background: #535353; border-bottom: 1px solid #444; }
.vis { width: 30px; display: grid; place-items: center; border-right: 1px solid #3d3d3d; color: #e6e6e6; }
.layer-body { flex: 1; display: flex; align-items: center; background: #6a6a6a; padding: 0 11px 0 4px; color: #fff; }
.thumb { width: 32px; height: 21px; border: 1px solid #222; background: #fff; margin-right: 10px; }
.layer-body em { flex: 1; }
```
